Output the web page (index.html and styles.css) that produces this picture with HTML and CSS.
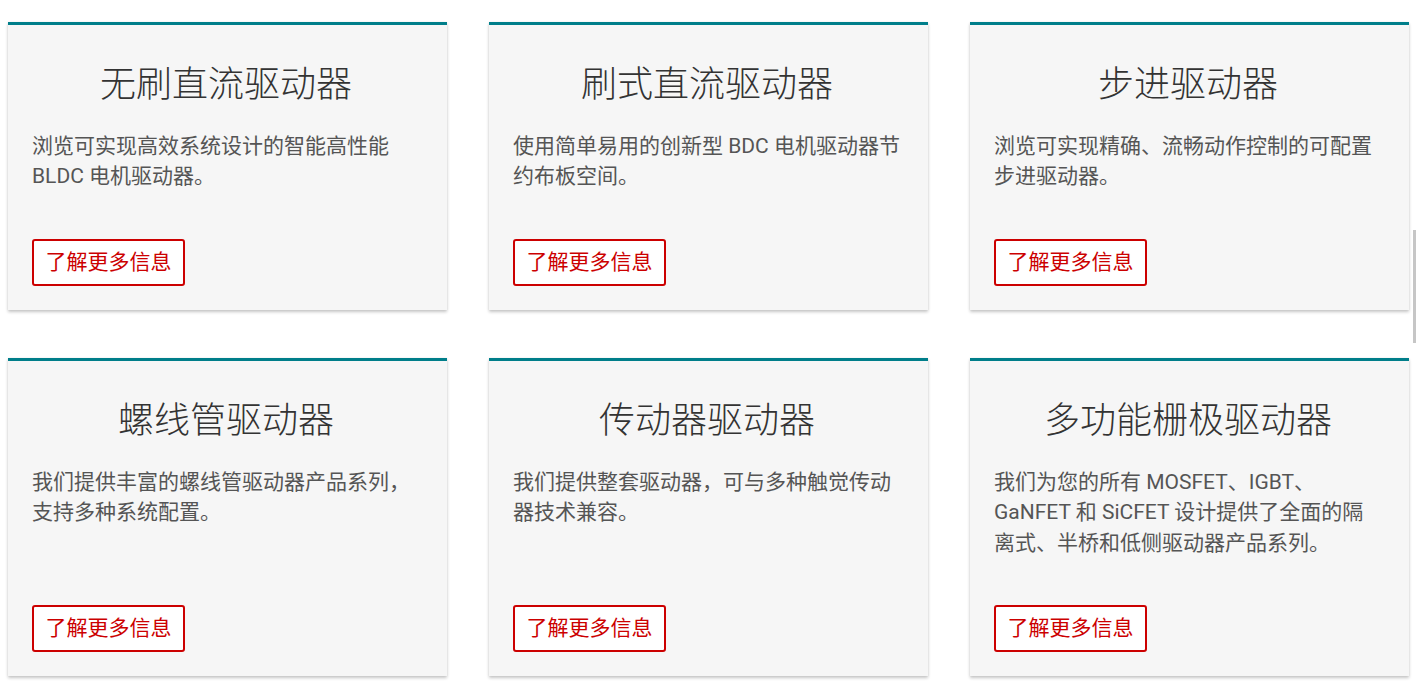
FILE: index.html
```html
<!DOCTYPE html>
<html lang="zh-CN">
<head>
    <meta charset="UTF-8">
    <title>电机驱动器</title>
    <link rel="stylesheet" href="styles.css">
</head>
<body>

<main class="cards">

    <div class="card">
        <h3 class="card-title">无刷直流驱动器</h3>
        <p class="card-text">浏览可实现高效系统设计的智能高性能 BLDC 电机驱动器。</p>
        <a class="card-btn" href="#">了解更多信息</a>
    </div>
    <div class="card">
        <h3 class="card-title">刷式直流驱动器</h3>
        <p class="card-text">使用简单易用的创新型 BDC 电机驱动器节约布板空间。</p>
        <a class="card-btn" href="#">了解更多信息</a>
    </div>
    <div class="card">
        <h3 class="card-title">步进驱动器</h3>
        <p class="card-text">浏览可实现精确、流畅动作控制的可配置步进驱动器。</p>
        <a class="card-btn" href="#">了解更多信息</a>
    </div>

    <div class="card">
        <h3 class="card-title">螺线管驱动器</h3>
        <p class="card-text">我们提供丰富的螺线管驱动器产品系列，支持多种系统配置。</p>
        <a class="card-btn" href="#">了解更多信息</a>
    </div>
    <div class="card">
        <h3 class="card-title">传动器驱动器</h3>
        <p class="card-text">我们提供整套驱动器，可与多种触觉传动器技术兼容。</p>
        <a class="card-btn" href="#">了解更多信息</a>
    </div>
    <div class="card">
        <h3 class="card-title">多功能栅极驱动器</h3>
        <p class="card-text">我们为您的所有 MOSFET、IGBT、GaNFET 和 SiCFET 设计提供了全面的隔离式、半桥和低侧驱动器产品系列。</p>
        <a class="card-btn" href="#">了解更多信息</a>
    </div>

</main>

<div class="scroll-thumb"></div>

</body>
</html>
```

FILE: styles.css
```css
html, body {
    margin: 0;
    padding: 0;
    background-color: #fff;
}
body {
    padding: 22px 8px 8px;
    font-family: Roboto, "Noto Sans CJK SC", sans-serif;
}

.cards {
    display: grid;
    grid-template-columns: repeat(3, 1fr);
    column-gap: 42px;
    row-gap: 48px;
}

.card {
    display: flex;
    flex-direction: column;
    align-items: flex-start;
    border-top: 3px solid #007e8a;
    background-color: #f6f6f6;
    padding: 24px 27px 24px 24px;
    box-shadow: 0 2px 3px rgba(0, 0, 0, 0.22), 0 0 2px rgba(0, 0, 0, 0.06);
}

.card-title {
    align-self: stretch;
    margin: 12px 0 22px;
    font-size: 36px;
    line-height: 48px;
    font-weight: 300;
    color: #333;
    text-align: center;
}

.card-text {
    margin: 0 0 47px;
    font-size: 21px;
    line-height: 1.45;
    color: #555;
}

.card-btn {
    margin-top: auto;
    display: block;
    padding: 0 11.5px;
    height: 43px;
    line-height: 43px;
    border: 2px solid #cc0000;
    border-radius: 3px;
    background-color: #fff;
    color: #cc0000;
    font-size: 21px;
    text-decoration: none;
}

.scroll-thumb {
    position: fixed;
    top: 230px;
    right: 1px;
    width: 3px;
    height: 113px;
    background-color: #c6c6c6;
}
```
